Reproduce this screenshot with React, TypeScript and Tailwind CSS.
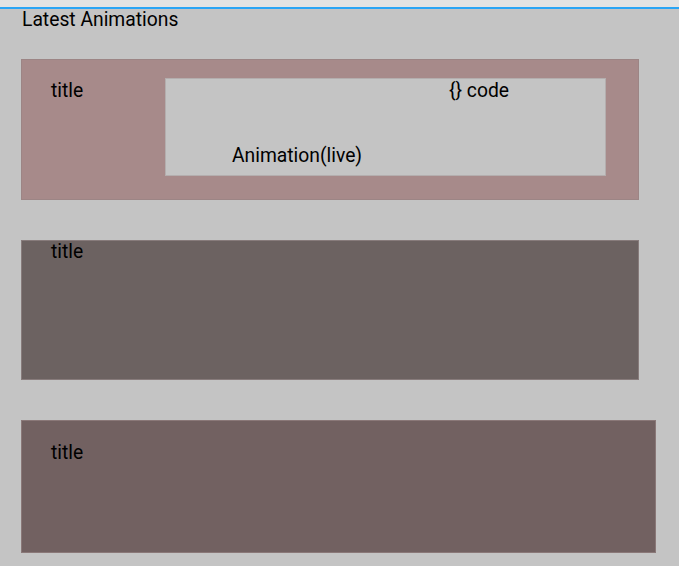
import React from "react";

export default function App() {
  return (
    <div className="min-h-[566px] bg-[#c4c4c4] text-black" style={{ fontFamily: "Roboto, 'Liberation Sans', sans-serif" }}>
      <div className="h-[7px] bg-[#e3e3e3]" />
      <div className="h-[2px] bg-[#2aa5f5]" />
      <div className="px-[21px]">
        <h1 className="pl-[1px] text-[19.3px] leading-[21px] font-normal">Latest Animations</h1>
        <div className="mt-[29px] flex h-[141px] w-[618px] items-start border border-[#9c8585] bg-[#a78a8a]">
          <div className="ml-[29px] mt-[20px] w-[114px] text-[19.3px] leading-[21px]">title</div>
          <div className="mt-[18px] flex h-[98px] w-[441px] flex-col border border-[#b4aeae] bg-[#c4c4c4] pt-[1px]">
            <div className="ml-[283px] text-[19.3px] leading-[21px]">{"{} code"}</div>
            <div className="ml-[66px] mt-[44px] text-[19.3px] leading-[21px]">Animation(live)</div>
          </div>
        </div>
        <div className="mt-[40px] h-[140px] w-[618px] border border-[#877b7b] bg-[#6c6261]">
          <div className="ml-[29px] mt-0 text-[19.3px] leading-[21px]">title</div>
        </div>
        <div className="mt-[40px] h-[133px] w-[635px] border border-[#8a7878] bg-[#726161]">
          <div className="ml-[29px] mt-[21px] text-[19.3px] leading-[21px]">title</div>
        </div>
      </div>
    </div>
  );
}
